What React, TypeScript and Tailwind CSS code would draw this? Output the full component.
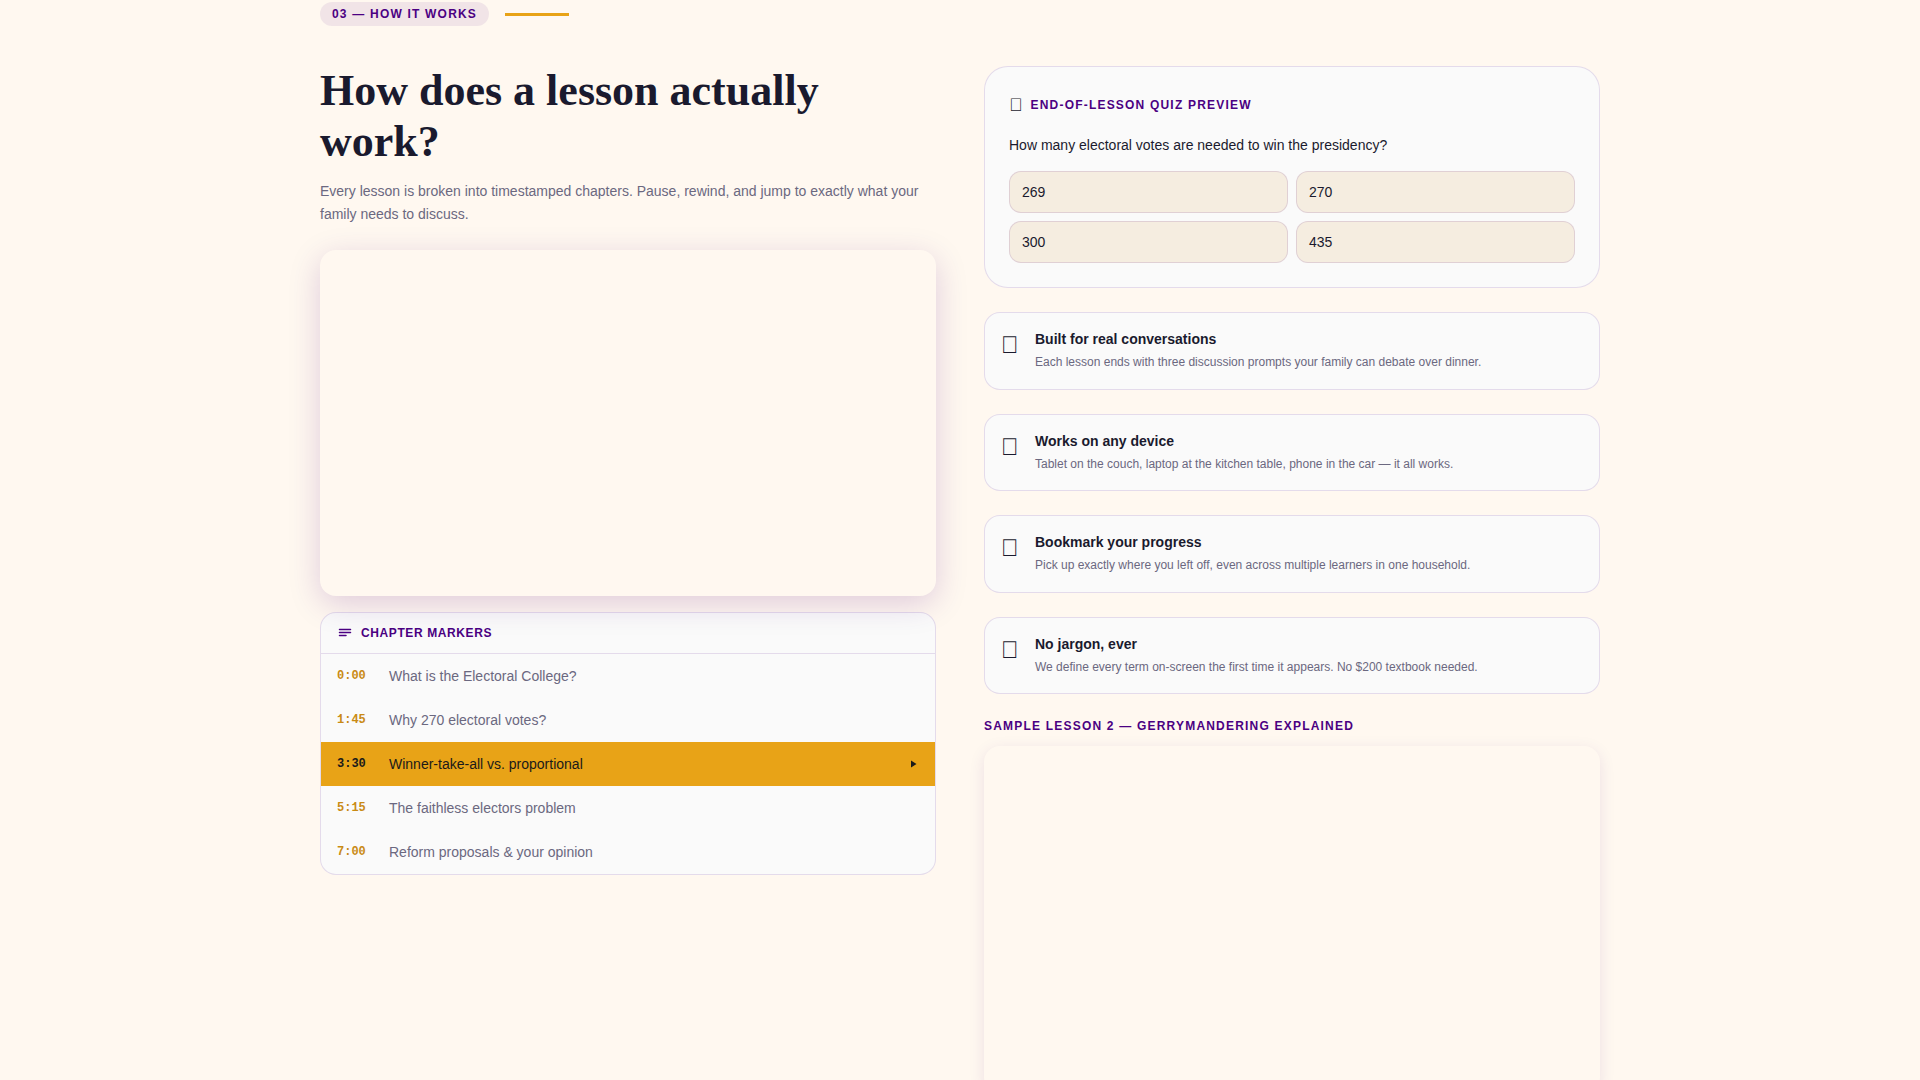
interface Chapter {
  time: string;
  title: string;
}

interface Feature {
  icon: string;
  title: string;
  description: string;
}

const chapters: Chapter[] = [
  { time: '0:00', title: 'What is the Electoral College?' },
  { time: '1:45', title: 'Why 270 electoral votes?' },
  { time: '3:30', title: 'Winner-take-all vs. proportional' },
  { time: '5:15', title: 'The faithless electors problem' },
  { time: '7:00', title: 'Reform proposals & your opinion' }
];

const activeChapter = 2;

const answers = ['269', '270', '300', '435'];

const features: Feature[] = [
  {
    icon: '\uE001',
    title: 'Built for real conversations',
    description: 'Each lesson ends with three discussion prompts your family can debate over dinner.'
  },
  {
    icon: '\uE001',
    title: 'Works on any device',
    description: 'Tablet on the couch, laptop at the kitchen table, phone in the car — it all works.'
  },
  {
    icon: '\uE001',
    title: 'Bookmark your progress',
    description: 'Pick up exactly where you left off, even across multiple learners in one household.'
  },
  {
    icon: '\uE001',
    title: 'No jargon, ever',
    description: 'We define every term on-screen the first time it appears. No $200 textbook needed.'
  }
];

function ChapterList() {
  return (
    <div className="mt-4 overflow-hidden rounded-2xl border border-[#4b0082]/12 bg-[#fafafa]">
      <div className="flex items-center gap-2 border-b border-[#4b0082]/12 px-4 py-3 text-[#4b0082]">
        <svg className="size-4" viewBox="0 0 16 16" fill="none" stroke="currentColor" strokeWidth="1.5" strokeLinecap="round">
          <path d="M2.5 4.5h11M2.5 7.5h11M2.5 10.5h6.5" />
        </svg>
        <h3 className="text-xs font-bold uppercase tracking-[0.6px]">Chapter markers</h3>
      </div>
      <ul>
        {chapters.map((chapter, index) => (
          <li key={chapter.time}>
            <button
              type="button"
              className={`flex w-full items-center gap-3 px-4 py-3 text-left text-sm ${
                index === activeChapter ? 'bg-[#e8a317] text-[#1a1a1a]' : 'text-[#6b6880]'
              }`}
            >
              <span
                className={`w-10 shrink-0 font-['Liberation_Mono',monospace] text-xs font-bold ${
                  index === activeChapter ? 'text-[#1a1a1a]' : 'text-[#c98a14]'
                }`}
              >
                {chapter.time}
              </span>
              <span className="flex-1">{chapter.title}</span>
              {index === activeChapter && (
                <svg className="size-3" viewBox="0 0 12 12" fill="currentColor">
                  <path d="M4 2.5v7L9.5 6z" />
                </svg>
              )}
            </button>
          </li>
        ))}
      </ul>
    </div>
  );
}

function QuizPreview() {
  return (
    <div className="rounded-3xl border border-[#4b0082]/12 bg-[#fafafa] p-6">
      <div className="mb-4 flex items-center gap-2">
        <span className="text-lg" aria-hidden="true">{'\uE001'}</span>
        <h3 className="text-xs font-bold uppercase tracking-[1.2px] text-[#4b0082]">End-of-lesson quiz preview</h3>
      </div>
      <p className="mb-4 text-sm">How many electoral votes are needed to win the presidency?</p>
      <div className="grid grid-cols-2 gap-2">
        {answers.map((answer) => (
          <button
            key={answer}
            type="button"
            className="rounded-xl border border-[#4b0082]/12 bg-[#f5ede0] px-3 py-[10px] text-left text-sm"
          >
            {answer}
          </button>
        ))}
      </div>
    </div>
  );
}

export default function App() {
  return (
    <main className="h-screen overflow-hidden bg-[#fff8f0] font-['Liberation_Sans',Arial,sans-serif] text-[#1a1a2e]">
      <section className="mx-auto max-w-7xl pt-[2px]" id="how-it-works">
        <div className="mb-10 flex items-center gap-4">
          <span className="rounded-full bg-[#4b0082]/8 px-3 py-1 text-xs font-bold uppercase tracking-[1.2px] text-[#4b0082]">
            03 — How it works
          </span>
          <span className="h-[3px] w-16 bg-[#e8a317]" />
        </div>

        <div className="grid grid-cols-2 items-start gap-12">
          <div>
            <h2 className="mb-[13px] font-['Liberation_Serif',serif] text-[44px] leading-[1.15] font-bold">
              How does a lesson actually work?
            </h2>
            <p className="mb-6 text-sm leading-relaxed text-[#6b6880]">
              Every lesson is broken into timestamped chapters. Pause, rewind, and jump to exactly what your family
              needs to discuss.
            </p>
            <div className="relative aspect-video rounded-2xl shadow-[0_8px_32px_rgba(75,0,130,0.18)]" />
            <ChapterList />
          </div>

          <div className="flex flex-col gap-6">
            <QuizPreview />
            {features.map((feature) => (
              <div
                key={feature.title}
                className="flex items-start gap-4 rounded-2xl border border-[#4b0082]/12 bg-[#fafafa] p-4"
              >
                <span className="text-2xl" aria-hidden="true">{feature.icon}</span>
                <div>
                  <h3 className="text-sm font-bold">{feature.title}</h3>
                  <p className="mt-1 text-xs leading-relaxed text-[#6b6880]">{feature.description}</p>
                </div>
              </div>
            ))}
            <div>
              <h3 className="mb-3 text-xs font-bold uppercase tracking-[1.2px] text-[#4b0082]">
                Sample lesson 2 — Gerrymandering explained
              </h3>
              <div className="aspect-video rounded-2xl shadow-[0_4px_16px_rgba(75,0,130,0.10)]" />
            </div>
          </div>
        </div>
      </section>
    </main>
  );
}
